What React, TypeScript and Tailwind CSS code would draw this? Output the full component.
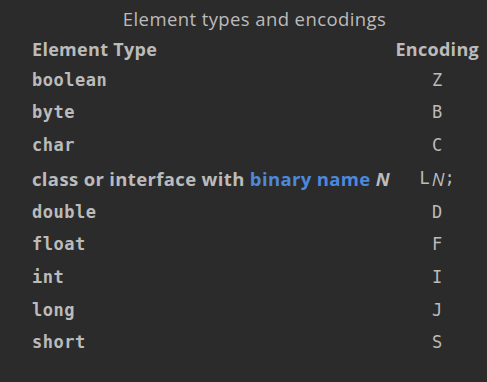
import React from "react"

const rows: { type: string; enc: string }[] = [
    { type: "boolean", enc: "Z" },
    { type: "byte", enc: "B" },
    { type: "char", enc: "C" },
    { type: "", enc: "" },
    { type: "double", enc: "D" },
    { type: "float", enc: "F" },
    { type: "int", enc: "I" },
    { type: "long", enc: "J" },
    { type: "short", enc: "S" },
]

export default function App() {
    return (
        <main className="w-[487px] h-[382px] bg-[#2b2b2b] text-[#bbbbbb] font-['Open_Sans',sans-serif] overflow-hidden">
            <div className="pt-[6px] text-center text-[18.5px] leading-[26px] pl-[22px] tracking-[0.4px]">Element types and encodings</div>
            <div className="pl-[32px] pr-[8px] pt-[2px]">
                <div className="grid grid-cols-[1fr_auto] items-center">
                    <div className="h-[30px] flex items-center font-bold text-[18px] tracking-[0.3px]">Element Type</div>
                    <div className="h-[30px] flex items-center font-bold text-[18px] tracking-[0.3px]">Encoding</div>
                    {rows.map((r, i) =>
                        r.type ? (
                            <React.Fragment key={i}>
                                <div className="h-[32.7px] flex items-center font-['DejaVu_Sans_Mono',monospace] font-bold text-[17px] tracking-[0.5px]">{r.type}</div>
                                <div className="h-[32.7px] flex items-center justify-center font-['DejaVu_Sans_Mono',monospace] text-[17px]">{r.enc}</div>
                            </React.Fragment>
                        ) : (
                            <React.Fragment key={i}>
                                <div className="h-[34px] flex items-center font-bold text-[18.5px] tracking-[0.35px]">
                                    class or interface with&nbsp;<span className="text-[#4d88dc]">binary name</span>&nbsp;<i>N</i>
                                </div>
                                <div className="h-[34px] flex items-center justify-center font-['DejaVu_Sans_Mono',monospace] text-[17px]">
                                    L<i className="font-['Open_Sans',sans-serif] text-[18px] pl-[2px]">N</i>;
                                </div>
                            </React.Fragment>
                        )
                    )}
                </div>
            </div>
        </main>
    )
}
